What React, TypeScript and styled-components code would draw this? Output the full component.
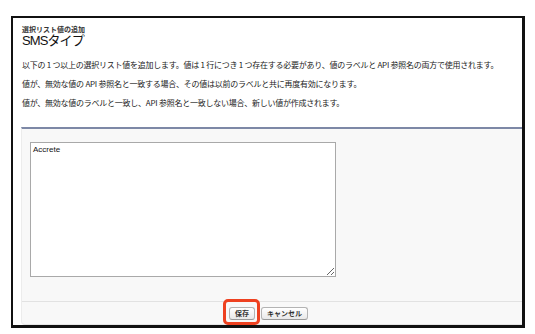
import React from "react";
import styled, { createGlobalStyle } from "styled-components";

const GlobalStyle = createGlobalStyle`
  html, body {
    margin: 0;
    padding: 0;
    background: #ffffff;
  }
  body {
    font-family: "Liberation Sans", "Noto Sans CJK JP", sans-serif;
    color: #222222;
  }
`;

const messages = [
  "以下の 1 つ以上の選択リスト値を追加します。値は 1 行につき 1 つ存在する必要があり、値のラベルと API 参照名の両方で使用されます。",
  "値が、無効な値の API 参照名と一致する場合、その値は以前のラベルと共に再度有効になります。",
  "値が、無効な値のラベルと一致し、API 参照名と一致しない場合、新しい値が作成されます。",
];

export default function App() {
  return (
    <>
      <GlobalStyle />
      <StyledFrame>
        <StyledHeader>
          <StyledSubTitle>選択リスト値の追加</StyledSubTitle>
          <StyledTitle>SMSタイプ</StyledTitle>
        </StyledHeader>
        <StyledMessages>
          {messages.map((text) => (
            <StyledMessage key={text}>{text}</StyledMessage>
          ))}
        </StyledMessages>
        <StyledPanel>
          <StyledPanelBody>
            <StyledTextArea defaultValue="Accrete" />
          </StyledPanelBody>
          <StyledButtonRow>
            <StyledHighlight>
              <StyledButton>保存</StyledButton>
            </StyledHighlight>
            <StyledButton>キャンセル</StyledButton>
          </StyledButtonRow>
        </StyledPanel>
      </StyledFrame>
    </>
  );
}

const StyledFrame = styled.section`
  box-sizing: border-box;
  width: 514px;
  height: 312px;
  margin: 16px 0 0 11px;
  border-style: solid;
  border-color: #111111;
  border-width: 2px 3px 3px 2px;
  padding: 0 0 0 8px;
  overflow: hidden;
  display: flex;
  flex-direction: column;
`;

const StyledHeader = styled.div`
  padding: 7px 0 0 1px;
`;

const StyledSubTitle = styled.div`
  font-family: "Noto Sans CJK JP", sans-serif;
  font-size: 7px;
  line-height: 8px;
  font-weight: 700;
  color: #333333;
`;

const StyledTitle = styled.h1`
  margin: 0;
  font-family: "Liberation Sans", "Noto Sans CJK JP", sans-serif;
  font-size: 13px;
  line-height: 16px;
  font-weight: 400;
  letter-spacing: -0.9px;
  color: #111111;
`;

const StyledMessages = styled.div`
  padding: 11px 0 0 1px;
  display: flex;
  flex-direction: column;
  gap: 10px;
`;

const StyledMessage = styled.p`
  margin: 0;
  font-family: "Noto Sans CJK JP", sans-serif;
  font-size: 8px;
  line-height: 9px;
  letter-spacing: -0.25px;
  color: #222222;
  white-space: nowrap;
`;

const StyledPanel = styled.div`
  margin-top: 20px;
  flex: 1;
  width: 510px;
  display: flex;
  flex-direction: column;
  background: #f8f8f8;
  border-top: 2px solid #7d88a6;
  border-left: 1px solid #ececec;
  border-bottom: 1px solid #e4e4e4;
  border-radius: 0 0 4px 4px;
`;

const StyledPanelBody = styled.div`
  flex: 1;
  padding: 13px 0 0 8px;
  border-bottom: 1px solid #e2e2e2;
`;

const StyledTextArea = styled.textarea`
  box-sizing: border-box;
  display: block;
  width: 306px;
  height: 135px;
  margin: 0;
  padding: 2px 2px;
  border: 1px solid #a9a9a9;
  border-radius: 0;
  background: #ffffff;
  font-family: "Liberation Sans", sans-serif;
  font-size: 8px;
  line-height: 10px;
  color: #111111;
  outline: none;
`;

const StyledButtonRow = styled.div`
  height: 22px;
  display: flex;
  align-items: center;
  gap: 6px;
  padding-left: 207px;
`;

const StyledHighlight = styled.div`
  position: relative;
  display: flex;

  &::after {
    content: "";
    position: absolute;
    top: -8px;
    left: -6px;
    right: -5px;
    bottom: -5px;
    border: 3px solid #ee4120;
    border-radius: 5px;
    pointer-events: none;
  }
`;

const StyledButton = styled.button`
  height: 13px;
  padding: 0 5px;
  border: 1px solid #b3b3b3;
  border-bottom-color: #999999;
  border-radius: 3px;
  background: linear-gradient(#ffffff, #e9e9e9);
  font-family: "Noto Sans CJK JP", sans-serif;
  font-size: 7px;
  line-height: 11px;
  font-weight: 700;
  color: #333333;
  cursor: pointer;
`;
